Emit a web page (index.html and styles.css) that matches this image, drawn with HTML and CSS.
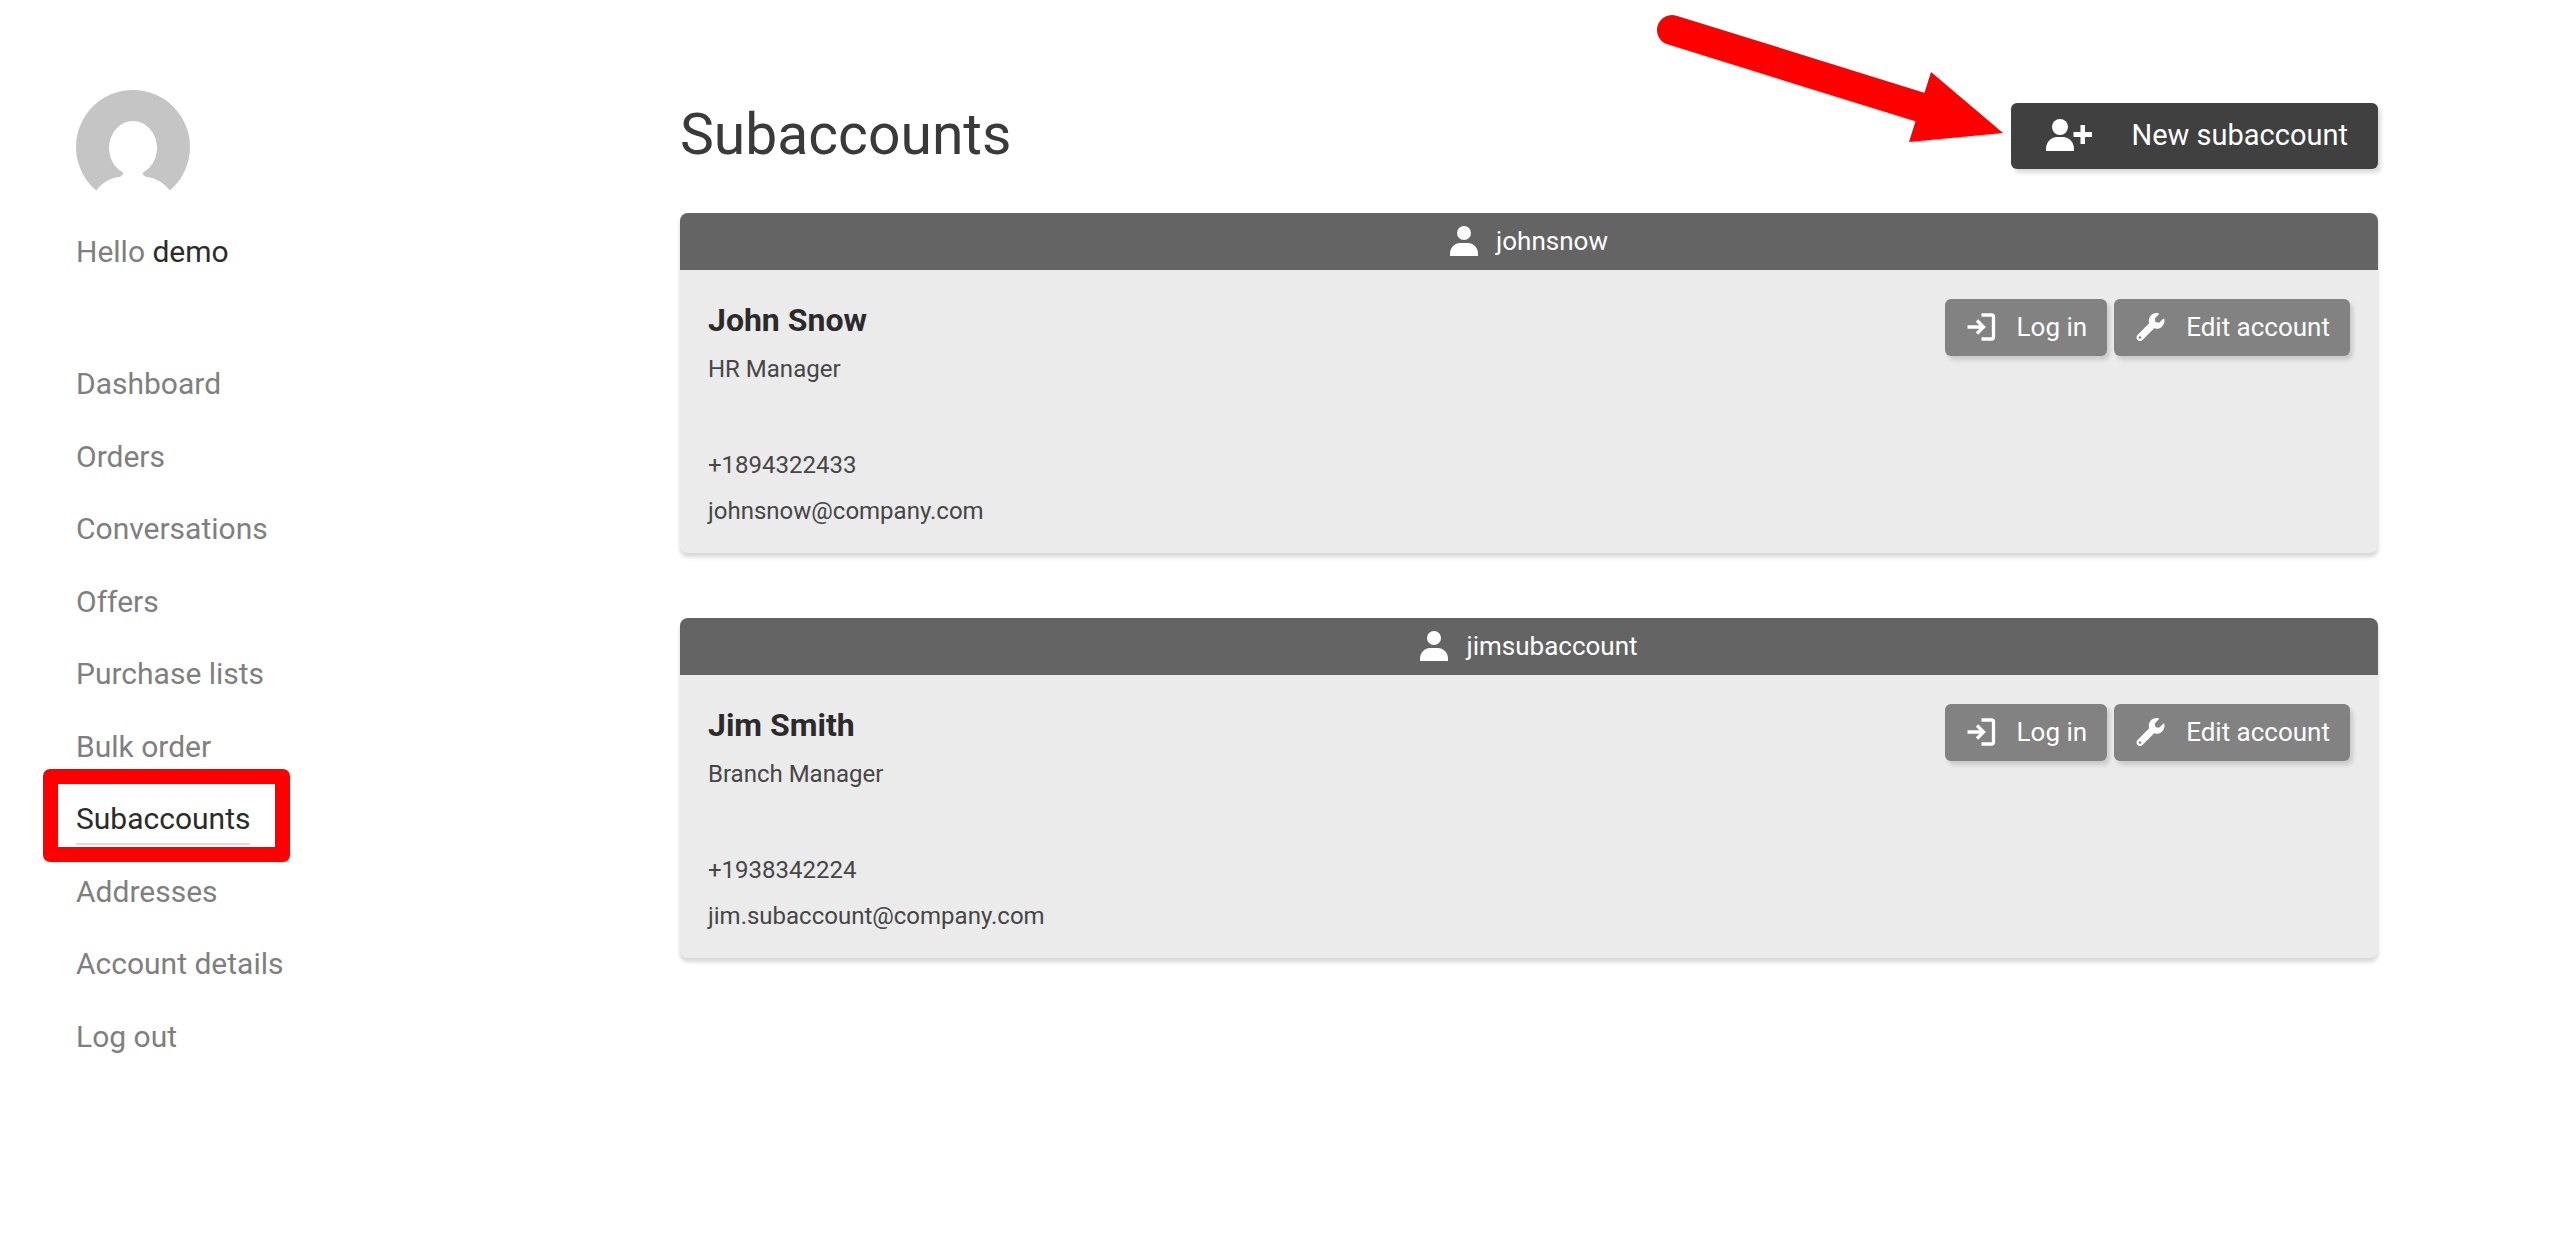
FILE: index.html
```html
<!DOCTYPE html>
<html lang="en">
<head>
  <meta charset="utf-8">
  <title>Subaccounts</title>
  <link rel="stylesheet" href="styles.css">
</head>
<body>
  <!-- shared icons -->
  <svg class="sprite" aria-hidden="true">
    <symbol id="icon-user" viewBox="0 0 28 30">
      <circle cx="14" cy="7" r="7"/>
      <path d="M0 30v-2c0-7 5-11 10-11h8c5 0 10 4 10 11v2z"/>
    </symbol>
    <symbol id="icon-user-plus" viewBox="0 0 46 32">
      <circle cx="14" cy="8" r="8"/>
      <path d="M0 32v-2c0-7 5-12 11-12h6c6 0 11 5 11 12v2z"/>
      <path d="M34.500 6h4.500v7h7v5h-7v7h-4.500v-7h-7v-5h7z"/>
    </symbol>
    <symbol id="icon-login" viewBox="0 0 28 28">
      <path d="M14 2h10q2 0 2 2v20q0 2-2 2H14M0 14h16M9.500 7.500l6.500 6.500-6.500 6.500" fill="none" stroke="currentColor" stroke-width="3.300"/>
    </symbol>
    <symbol id="icon-wrench" viewBox="0 0 512 512">
      <path d="M507.73 109.1c-2.24-9.03-13.54-12.09-20.12-5.51l-74.36 74.36-67.88-11.31-11.31-67.88 74.36-74.36c6.62-6.62 3.43-17.9-5.66-20.16-47.38-11.74-99.55.91-136.58 37.93-39.64 39.64-50.55 97.1-34.05 147.2L18.74 402.76c-24.99 24.99-24.99 65.51 0 90.5 24.99 24.99 65.51 24.99 90.5 0l213.21-213.21c50.12 16.71 107.47 5.68 147.37-34.22 37.07-37.07 49.7-89.32 37.91-136.73zM64 472c-13.25 0-24-10.75-24-24 0-13.26 10.75-24 24-24s24 10.74 24 24c0 13.25-10.75 24-24 24z"/>
    </symbol>
  </svg>

  <div class="page">
    <aside class="sidebar">
      <svg class="avatar" viewBox="0 0 114 114" aria-hidden="true">
        <circle cx="57" cy="57" r="57" fill="#c5c5c5"/>
        <ellipse cx="57" cy="58" rx="24" ry="27" fill="#fff"/>
        <path d="M0 114L20 101C26 92 35 88 43 87Q47 86 47 83H67Q67 86 71 87C79 88 88 92 94 101L114 114V116H0z" fill="#fff"/>
      </svg>
      <p class="hello">Hello <span class="hello-name">demo</span></p>
      <nav>
        <ul class="menu">
          <li><a href="#">Dashboard</a></li>
          <li><a href="#">Orders</a></li>
          <li><a href="#">Conversations</a></li>
          <li><a href="#">Offers</a></li>
          <li><a href="#">Purchase lists</a></li>
          <li><a href="#">Bulk order</a></li>
          <li class="active"><a href="#">Subaccounts</a></li>
          <li><a href="#">Addresses</a></li>
          <li><a href="#">Account details</a></li>
          <li><a href="#">Log out</a></li>
        </ul>
      </nav>
    </aside>

    <main class="content">
      <div class="content-header">
        <h1>Subaccounts</h1>
        <div class="new-wrapper">
          <svg class="arrow" viewBox="0 0 346 130" aria-hidden="true">
            <path d="M15 16L266 94" stroke="#f00" stroke-width="30" stroke-linecap="round"/>
            <path d="M274 58L346 119L252 128z" fill="#f00"/>
          </svg>
          <button type="button" class="btn btn-new">
            <svg class="icon-new"><use href="#icon-user-plus"/></svg>
            New subaccount
          </button>
        </div>
      </div>

      <section class="card">
        <div class="card-header">
          <svg class="icon-user"><use href="#icon-user"/></svg>
          johnsnow
        </div>
        <div class="card-body">
          <div class="info">
            <h2>John Snow</h2>
            <p>HR Manager</p>
            <p class="phone">+1894322433</p>
            <p>johnsnow@company.com</p>
          </div>
          <div class="actions">
            <button type="button" class="btn"><svg class="icon"><use href="#icon-login"/></svg>Log in</button>
            <button type="button" class="btn"><svg class="icon"><use href="#icon-wrench"/></svg>Edit account</button>
          </div>
        </div>
      </section>

      <section class="card">
        <div class="card-header">
          <svg class="icon-user"><use href="#icon-user"/></svg>
          jimsubaccount
        </div>
        <div class="card-body">
          <div class="info">
            <h2>Jim Smith</h2>
            <p>Branch Manager</p>
            <p class="phone">+1938342224</p>
            <p>jim.subaccount@company.com</p>
          </div>
          <div class="actions">
            <button type="button" class="btn"><svg class="icon"><use href="#icon-login"/></svg>Log in</button>
            <button type="button" class="btn"><svg class="icon"><use href="#icon-wrench"/></svg>Edit account</button>
          </div>
        </div>
      </section>
    </main>
  </div>
</body>
</html>
```

FILE: styles.css
```css
* {
  box-sizing: border-box;
}
body {
  margin: 0;
  font-family: Roboto, sans-serif;
  font-size: 24px;
  color: #464646;
  background-color: #fff;
}
h1, h2, p, ul {
  margin: 0;
  padding: 0;
}
svg {
  fill: currentColor;
  flex-shrink: 0;
}
.sprite {
  position: absolute;
  width: 0;
  height: 0;
}
.page {
  display: flex;
  padding: 90px 182px 90px 76px;
}

/* sidebar */
.sidebar {
  width: 604px;
  flex-shrink: 0;
}
.avatar {
  display: block;
  width: 114px;
  height: 114px;
  margin-bottom: 25px;
}
.hello {
  font-size: 30px;
  line-height: 46px;
  color: #7f7f7f;
  margin-bottom: 74px;
}
.hello-name {
  color: #2b2b2b;
}
.menu {
  list-style: none;
  display: flex;
  flex-direction: column;
  min-height: 725px;
}
.menu li {
  flex: 1;
  display: flex;
  align-items: center;
}
.menu a {
  font-size: 30px;
  line-height: 48px;
  color: #7f7f7f;
  text-decoration: none;
  border-bottom: 2px solid transparent;
}
.menu .active a {
  position: relative;
  color: #2b2b2b;
  border-bottom-color: #dddde0;
}
/* red frame around the current item */
.menu .active a::after {
  content: "";
  position: absolute;
  top: -26px;
  bottom: -19px;
  left: -33px;
  right: -40px;
  border: 15px solid #f00;
  border-radius: 7px;
}

/* content */
.content {
  flex: 1;
  padding-top: 13px;
}
.content-header {
  display: flex;
  justify-content: space-between;
  margin-bottom: 44px;
}
h1 {
  font-size: 57px;
  font-weight: 400;
  line-height: 64px;
  color: #3a3a3a;
}
.new-wrapper {
  position: relative;
}
.arrow {
  position: absolute;
  top: -89px;
  right: calc(100% + 8px);
  width: 346px;
  height: 130px;
}
.btn {
  display: flex;
  align-items: center;
  gap: 21px;
  height: 57px;
  padding: 0 20px 2px 22px;
  border: none;
  border-radius: 6px;
  background-color: #828282;
  color: #fff;
  font-family: inherit;
  font-size: 26px;
  box-shadow: 3px 4px 4px rgba(0,0,0,0.14);
  cursor: pointer;
}
.btn-new {
  gap: 40px;
  height: 66px;
  padding: 0 30px 2px 35px;
  background-color: #404040;
  font-size: 29px;
}
.icon {
  width: 29px;
  height: 28px;
}
.icon-new {
  width: 46px;
  height: 32px;
}
.icon-user {
  width: 28px;
  height: 30px;
}
.card {
  border-radius: 8px;
  background-color: #ebebeb;
  box-shadow: 0 4px 4px rgba(0,0,0,0.16);
  margin-bottom: 65px;
  overflow: hidden;
}
.card-header {
  display: flex;
  justify-content: center;
  align-items: center;
  gap: 18px;
  height: 57px;
  padding-bottom: 2px;
  background-color: #646464;
  color: #fff;
  font-size: 26px;
}
.card-body {
  display: flex;
  justify-content: space-between;
  padding: 26px 28px 19px;
}
.info {
  line-height: 46px;
}
h2 {
  font-size: 32px;
  font-weight: 700;
  line-height: 48px;
  margin-bottom: 2px;
  color: #2b2b2b;
}
.phone {
  margin-top: 50px;
}
.actions {
  display: flex;
  align-items: flex-start;
  gap: 7px;
  padding-top: 3px;
}
```
